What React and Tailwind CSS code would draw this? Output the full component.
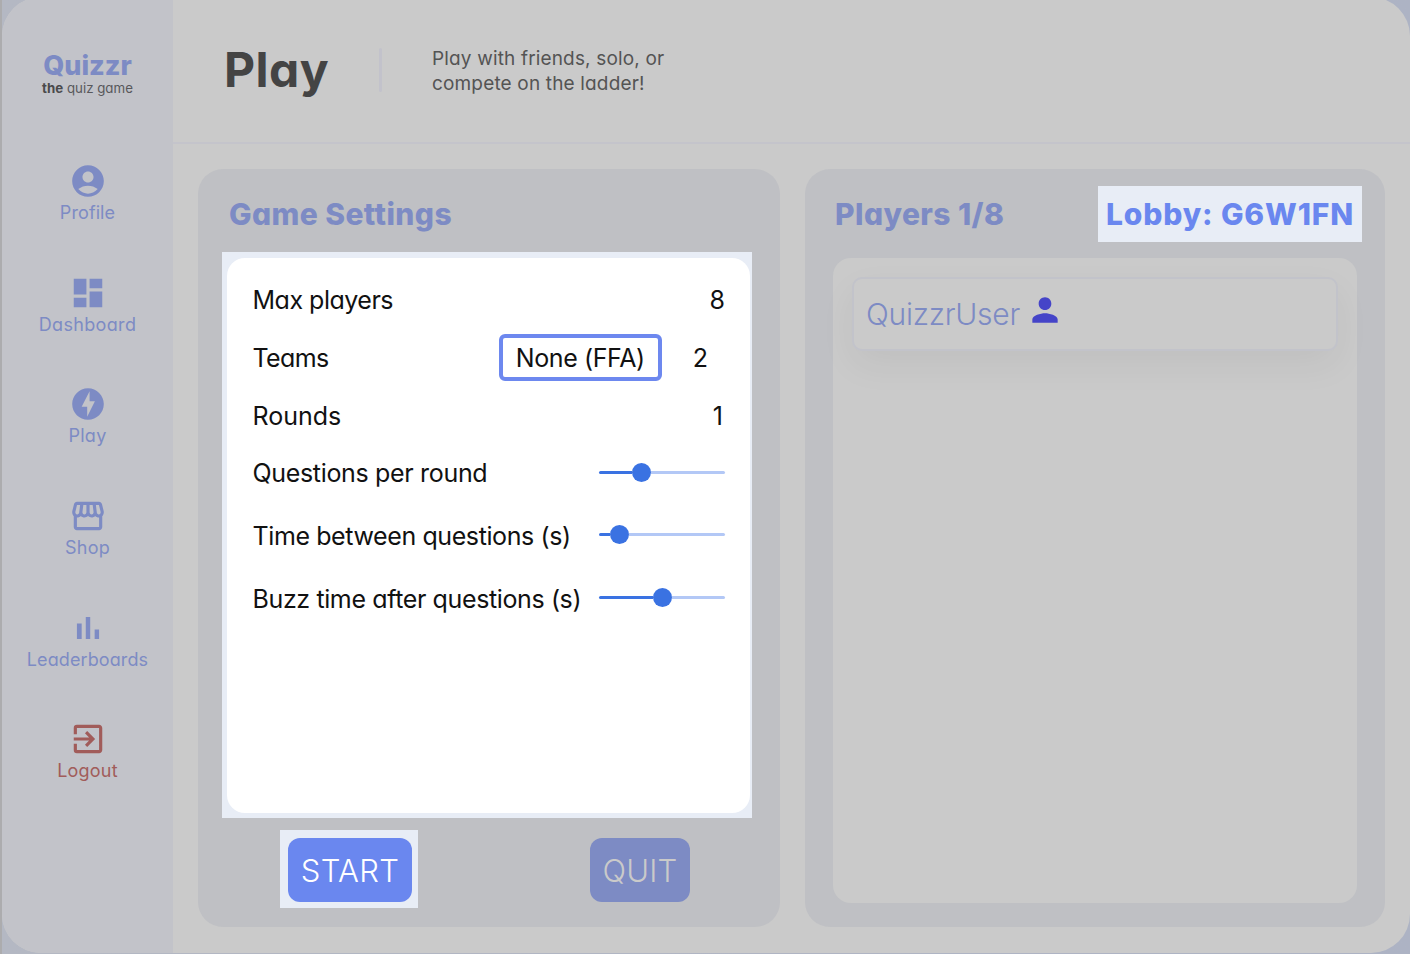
import React from "react";
import { MdAccountCircle, MdDashboard, MdOfflineBolt, MdOutlineStorefront, MdExitToApp, MdPerson } from "react-icons/md";

function BarsIcon({ size }) {
  return (
    <svg width={size} height={size} viewBox="0 0 24 24" fill="currentColor">
      <path d="M5 9.2h3V19H5V9.2zM10.6 5h2.8v14h-2.8V5zm5.6 8H19v6h-2.8v-6z" />
    </svg>
  );
}

const NAV = [
  { label: "Profile", Icon: MdAccountCircle, cls: "text-[#7d8bc4] tracking-[0.1px]" },
  { label: "Dashboard", Icon: MdDashboard, cls: "text-[#7d8bc4] tracking-[0.35px]" },
  { label: "Play", Icon: MdOfflineBolt, cls: "text-[#7d8bc4] tracking-[0.3px]" },
  { label: "Shop", Icon: MdOutlineStorefront, cls: "text-[#7d8bc4] tracking-[0.3px]" },
  { label: "Leaderboards", Icon: BarsIcon, cls: "text-[#7d8bc4] tracking-[0.1px]" },
  { label: "Logout", Icon: MdExitToApp, cls: "text-[#a15c5a] tracking-[0.2px]" },
];

function Sidebar() {
  return (
    <aside className="flex w-[171px] shrink-0 flex-col items-center bg-[#c2c3c9]">
      <div className="mt-[54px] flex flex-col items-center">
        <div className="h-[30px] text-[27px] leading-[30px] font-extrabold text-[#7d8bc4]">Quizzr</div>
        <div className="h-[15px] text-[13.3px] leading-[15px] text-[#58585b]">
          <b className="text-[#4a4a4c]">the</b> quiz game
        </div>
      </div>
      <nav className="mt-[66.3px] flex flex-col items-center">
        {NAV.map(({ label, Icon, cls }) => (
          <div key={label} className={`flex h-[111.6px] flex-col items-center ${cls}`}>
            <div className="pl-[1px]">
              <Icon size={38} />
            </div>
            <span className="h-[24px] text-[18px] leading-[26px] font-[370]">{label}</span>
          </div>
        ))}
      </nav>
    </aside>
  );
}

function Header() {
  return (
    <header className="flex h-[147px] items-start border-b-2 border-[#c4c4cb] pl-[51px]">
      <h1 className="mt-[43px] w-[155px] text-[48px] leading-[60px] font-bold tracking-[0.5px] text-[#444444]">Play</h1>
      <div className="mt-[51px] h-[44px] w-[3px] rounded-full bg-[#c2c2cb]" />
      <p className="mt-[49px] ml-[50px] text-[19px] leading-[25px] tracking-[0.16px] text-[#545454]">
        Play with friends, solo, or
        <br />
        compete on the ladder!
      </p>
    </header>
  );
}

function Slider({ value }) {
  return (
    <div className="flex h-[19px] w-[126px] items-center">
      <div className="h-[3px] rounded-l-full bg-[#3a72e2]" style={{ width: value - 9 }} />
      <div className="size-[19px] shrink-0 rounded-full bg-[#3a72e2]" />
      <div className="h-[3px] flex-1 rounded-r-full bg-[#b3c8f6]" />
    </div>
  );
}

function Settings() {
  return (
    <section className="flex h-[758px] w-[582px] flex-col rounded-[25px] bg-[#bfc0c4]">
      <h2 className="mt-[24px] h-[59px] pl-[31px] text-[30px] leading-[42px] font-extrabold tracking-[0.42px] text-[#7d8bc4]">Game Settings</h2>
      <div className="ml-[24px] h-[566px] w-[530px] bg-[#e8edf6] pt-[6px] pr-[2px] pb-[5px] pl-[5px]">
        <div className="h-full rounded-[18px] bg-white pt-[27px] pr-[25px] pl-[25.5px] text-[25px] leading-[30px] text-[#111111]">
          <div className="flex h-[58px] justify-between"><span className="tracking-[-0.5px]">Max players</span><span>8</span></div>
          <div className="flex h-[58px] justify-between">
            <span className="tracking-[-0.6px]">Teams</span>
            <div className="flex pr-[17px]">
              <div className="-mt-[9px] mr-[31px] flex h-[47px] w-[163px] items-center justify-center rounded-[6px] border-[4px] border-[#6d88ef] tracking-[-0.4px]">
                None (FFA)
              </div>
              <span>2</span>
            </div>
          </div>
          <div className="flex h-[57px] justify-between"><span>Rounds</span><span className="pr-[2px]">1</span></div>
          <div className="flex h-[63px] justify-between"><span className="tracking-[-0.33px]">Questions per round</span><div className="mt-[4.5px]"><Slider value={42} /></div></div>
          <div className="flex h-[63px] justify-between"><span className="tracking-[-0.4px]">Time between questions (s)</span><div className="mt-[4px]"><Slider value={20} /></div></div>
          <div className="flex h-[63px] justify-between"><span className="tracking-[-0.38px] whitespace-nowrap">Buzz time after questions (s)</span><div className="mt-[4px]"><Slider value={62.5} /></div></div>
        </div>
      </div>
      <div className="flex pt-[12px] pl-[82px]">
        <div className="h-[78px] w-[138px] bg-[#e8edf6] p-[8px] pr-[6px]">
          <button className="h-[64px] w-[124px] rounded-[12px] bg-[#6a87ef] pt-px text-[31px] leading-[64px] font-[360] tracking-[0.3px] text-white">START</button>
        </div>
        <button className="mt-[8px] ml-[172px] h-[64px] w-[100px] rounded-[12px] bg-[#7d8bc4] pt-px text-[31px] leading-[64px] font-[360] tracking-[0.2px] text-[#cacaca]">QUIT</button>
      </div>
    </section>
  );
}

function Players() {
  return (
    <section className="ml-[25px] flex h-[758px] w-[580px] flex-col rounded-[25px] bg-[#bfc0c4]">
      <div className="flex h-[89px] justify-between pt-[17px] pr-[23px] pl-[30px]">
        <h2 className="mt-[7px] text-[30px] leading-[42px] font-extrabold tracking-[0.42px] text-[#7d8bc4]">Players 1/8</h2>
        <div className="h-[56px] w-[264px] bg-[#e8edf6] pt-[7px] text-center text-[30px] leading-[42px] font-extrabold tracking-[0.85px] whitespace-nowrap text-[#6a87ef]">Lobby: G6W1FN</div>
      </div>
      <div className="ml-[28px] h-[645px] w-[524px] rounded-[18px] bg-[#cacaca] px-[19px] pt-[19px]">
        <div className="flex h-[74px] rounded-[10px] border-2 border-[#c2c3ca] bg-[#cacaca] pl-[12px] text-[#7d8bc4] shadow-[0_14px_36px_rgba(0,0,0,0.05)]">
          <span className="mt-[14px] w-[155px] text-[30px] leading-[42px] font-[360] tracking-[-0.25px]">QuizzrUser</span>
          <MdPerson size={38} className="mt-[12px] ml-[5px] text-[#4544c8]" />
        </div>
      </div>
    </section>
  );
}

export default function App() {
  return (
    <div className="h-[954px] w-[1410px] overflow-hidden border-l-2 border-[#acacae] bg-[linear-gradient(90deg,#b4b8c3,#adb3c4)] font-['Inter',sans-serif] [font-feature-settings:'cv11']">
      <div className="-mt-[3px] flex h-[956px] w-[1408px] overflow-hidden rounded-[39px] bg-[#cacaca]">
        <Sidebar />
        <main className="flex-1">
          <Header />
          <div className="mt-[25px] ml-[25px] flex">
            <Settings />
            <Players />
          </div>
        </main>
      </div>
    </div>
  );
}
